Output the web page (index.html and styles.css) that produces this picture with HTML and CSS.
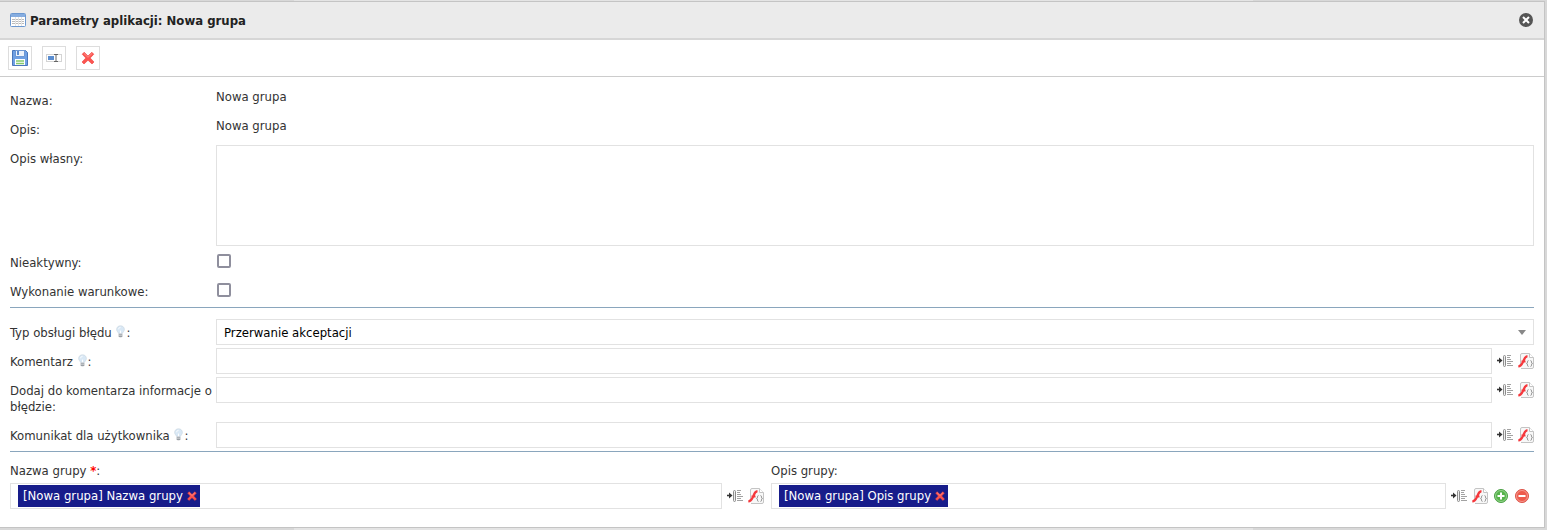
FILE: index.html
```html
<!DOCTYPE html>
<html lang="pl">
<head>
  <meta charset="UTF-8">
  <title>Parametry aplikacji</title>
  <link rel="stylesheet" href="styles.css">
</head>
<body>

  <!-- Shared icons -->
  <svg class="sprite" aria-hidden="true">
    <symbol id="i-cross" viewBox="0 0 16 16">
      <path d="M4.200 2.200 8 6l3.800-3.800 2 2L10.200 8l3.800 4-2 2L8 10.200 4 14l-2-2 3.800-4-3.600-3.800z" fill="#fb5550" stroke="#f0403c" stroke-width=".6" stroke-linejoin="round"/>
      <path d="M4 3.500 8 7.300l4-3.800" fill="none" stroke="#ff8f8a"/>
    </symbol>
    <symbol id="i-bulb" viewBox="0 0 12 14">
      <path d="M6 .8C3.400.8 1.800 2.500 1.800 4.700c0 1.900 1.400 2.700 2 4.300h4.400c.6-1.600 2-2.400 2-4.300C10.200 2.500 8.600.8 6 .8z" fill="#d9e8f5" stroke="#cdd8e2" stroke-width=".8"/>
      <path d="M4 4.500C4 3.200 5 2.500 6 2.500M6 9V6" fill="none" stroke="#fff"/>
      <path d="M4 9.500h4v2.700L7 13.400H5l-1-1.200z" fill="#9aa0a6"/>
      <path d="M4 11h4" stroke="#d8dadd"/>
    </symbol>
    <symbol id="i-insert" viewBox="0 0 16 16">
      <path d="M0 7.500h3" stroke="#333" stroke-width="1.600"/>
      <path d="M2 4.500 5.500 7.500 2 10.500z" fill="#333"/>
      <rect x="6.500" y="2.500" width="2" height="11" rx="1" fill="#eee" stroke="#8c8c8c"/>
      <path d="M10 2.500h4M10 4.500h3M10 6.500h4M10 8.500h6M10 10.500h4M10 12.500h6" stroke="#a2a2a2"/>
    </symbol>
    <symbol id="i-fx" viewBox="0 0 16 16">
      <path d="M2.500 13V2q0-1.500 1.500-1.500h7.500l4 4V14q0 1.500-1.500 1.500H3" fill="#f8f8f8" stroke="#c4c4c4"/>
      <path d="M11.500.5v4h4" fill="#fff" stroke="#c4c4c4"/>
      <path d="M9.500 3.200C6.500 3.500 6.200 6.500 5 9s-2.200 4.300-4.700 4.500M3.500 8.500h4" fill="none" stroke="#f5383c" stroke-width="2.200"/>
      <path d="M10.500 7.500q-1 0-1 1.500t-1 1.500q1 0 1 1.500t1 1.500M12.500 7.500q1 0 1 1.500t1 1.500q-1 0-1 1.500t-1 1.500" fill="none" stroke="#999"/>
    </symbol>
  </svg>

  <div class="dialog" role="dialog" aria-labelledby="dialogTitle">
    <div class="dialog-header">
      <svg class="icon" viewBox="0 0 16 16">
        <rect x=".5" y="1.500" width="15" height="13" rx="1" fill="#fff" stroke="#6c98d0"/>
        <path d="M1 2h14v3H1z" fill="#86ade0"/>
        <path d="M2 7.500h12M2 9.500h12M2 11.500h12" stroke="#bbb"/>
        <path d="M5.500 5v9M8.500 5v9M11.500 5v9" stroke="#e4e4e4"/>
      </svg>
      <h1 id="dialogTitle">Parametry aplikacji: Nowa grupa</h1>
      <button type="button" class="close" aria-label="Zamknij">
        <svg viewBox="0 0 14 14">
          <circle cx="7" cy="7" r="7" fill="#555"/>
          <path d="m4 4 6 6M10 4l-6 6" stroke="#fff" stroke-width="2"/>
        </svg>
      </button>
    </div>

    <div class="toolbar">
      <button type="button" aria-label="Zapisz">
        <svg class="icon" viewBox="0 0 16 16">
          <path d="M.5.5h13l2 2v13H.5z" fill="#6fa0e4" stroke="#4a76bb"/>
          <path d="M3.500.5h9v6h-9z" fill="#edf3fb" stroke="#6d97d4"/>
          <path d="M5 1h2v4H5z" fill="#5c8bd0"/>
          <path d="M3 9h10v6H3z" fill="#fff"/>
          <path d="M4 11h8M4 13.500h8" stroke="#85c96c" stroke-width="1.500"/>
        </svg>
      </button>
      <button type="button" aria-label="Pole">
        <svg class="icon" viewBox="0 0 16 16">
          <rect x=".5" y="4.500" width="15" height="7" fill="#fff" stroke="#d4d4d4"/>
          <path d="M2 6h6v4H2z" fill="#5a8dd0"/>
          <path d="M8 4.500h4M8 11.500h4M10 4.500v7" fill="none" stroke="#666"/>
        </svg>
      </button>
      <button type="button" aria-label="Usuń">
        <svg class="icon"><use href="#i-cross"/></svg>
      </button>
    </div>

    <form class="content">
      <div class="rows">
        <div class="row">
          <span class="label">Nazwa:</span>
          <span class="value">Nowa grupa</span>
        </div>
        <div class="row">
          <span class="label">Opis:</span>
          <span class="value">Nowa grupa</span>
        </div>
        <div class="row">
          <label class="label" for="ownDesc">Opis własny:</label>
          <textarea id="ownDesc"></textarea>
        </div>
        <div class="row">
          <label class="label" for="inactive">Nieaktywny:</label>
          <input type="checkbox" id="inactive">
        </div>
        <div class="row">
          <label class="label" for="conditional">Wykonanie warunkowe:</label>
          <input type="checkbox" id="conditional">
        </div>
      </div>

      <hr>

      <div class="rows">
        <div class="row">
          <label class="label" for="errorType">Typ obsługi błędu <svg class="bulb"><use href="#i-bulb"/></svg>:</label>
          <div class="select">
            <select id="errorType">
              <option>Przerwanie akceptacji</option>
            </select>
          </div>
        </div>
        <div class="row">
          <label class="label" for="comment">Komentarz <svg class="bulb"><use href="#i-bulb"/></svg>:</label>
          <div class="field">
            <input type="text" id="comment">
            <button type="button" aria-label="Wstaw"><svg class="icon"><use href="#i-insert"/></svg></button>
            <button type="button" aria-label="Funkcja"><svg class="icon"><use href="#i-fx"/></svg></button>
          </div>
        </div>
        <div class="row">
          <label class="label" for="errorInfo">Dodaj do komentarza informacje o błędzie:</label>
          <div class="field">
            <input type="text" id="errorInfo">
            <button type="button" aria-label="Wstaw"><svg class="icon"><use href="#i-insert"/></svg></button>
            <button type="button" aria-label="Funkcja"><svg class="icon"><use href="#i-fx"/></svg></button>
          </div>
        </div>
        <div class="row">
          <label class="label" for="message">Komunikat dla użytkownika <svg class="bulb"><use href="#i-bulb"/></svg>:</label>
          <div class="field">
            <input type="text" id="message">
            <button type="button" aria-label="Wstaw"><svg class="icon"><use href="#i-insert"/></svg></button>
            <button type="button" aria-label="Funkcja"><svg class="icon"><use href="#i-fx"/></svg></button>
          </div>
        </div>
      </div>

      <hr>

      <div class="columns">
        <div>
          <label for="groupName">Nazwa grupy <b class="required">*</b>:</label>
          <div class="field">
            <div class="tags">
              <span class="tag">[Nowa grupa] Nazwa grupy
                <button type="button" aria-label="Usuń"><svg><use href="#i-cross"/></svg></button>
              </span>
              <input type="text" id="groupName">
            </div>
            <button type="button" aria-label="Wstaw"><svg class="icon"><use href="#i-insert"/></svg></button>
            <button type="button" aria-label="Funkcja"><svg class="icon"><use href="#i-fx"/></svg></button>
          </div>
        </div>
        <div class="last">
          <label for="groupDesc">Opis grupy:</label>
          <div class="field">
            <div class="tags">
              <span class="tag">[Nowa grupa] Opis grupy
                <button type="button" aria-label="Usuń"><svg><use href="#i-cross"/></svg></button>
              </span>
              <input type="text" id="groupDesc">
            </div>
            <button type="button" aria-label="Wstaw"><svg class="icon"><use href="#i-insert"/></svg></button>
            <button type="button" aria-label="Funkcja"><svg class="icon"><use href="#i-fx"/></svg></button>
            <button type="button" aria-label="Dodaj">
              <svg class="icon" viewBox="0 0 16 16">
                <circle cx="8" cy="8" r="6.500" fill="#56b34b" stroke="#4ba145"/>
                <circle cx="8" cy="8" r="5.500" fill="none" stroke="#a6dc9e" stroke-width=".8"/>
                <path d="M8 4.500v7M4.500 8h7" stroke="#fff" stroke-width="2"/>
              </svg>
            </button>
            <button type="button" aria-label="Usuń wiersz">
              <svg class="icon" viewBox="0 0 16 16">
                <circle cx="8" cy="8" r="6.500" fill="#ee5a4c" stroke="#dc5449"/>
                <circle cx="8" cy="8" r="5.500" fill="none" stroke="#f8a69d" stroke-width=".8"/>
                <path d="M4.500 8h7" stroke="#fff" stroke-width="2"/>
              </svg>
            </button>
          </div>
        </div>
      </div>
    </form>
  </div>

</body>
</html>
```
FILE: styles.css
```css
* {
  box-sizing: border-box;
}

body {
  margin: 0;
  padding: 1px 2px 2px 0;
  background: linear-gradient(to right, #d8d8d8 19%, #e4e4e4 19% 81%, #d8d8d8 81%);
  color: #333;
  font-family: "DejaVu Sans Condensed", Tahoma, "Noto Sans", sans-serif;
  font-size: 13px;
  line-height: 16px;
}

button,
input,
select,
textarea {
  font: inherit;
  margin: 0;
}

button {
  display: flex;
  padding: 0;
  border: none;
  background: none;
  cursor: pointer;
}

.sprite {
  display: none;
}

.icon {
  display: block;
  width: 16px;
  height: 16px;
}

.dialog {
  background-color: #fff;
  border: 1px solid #c4c4c4;
  border-left: none;
}

.dialog-header {
  display: flex;
  align-items: center;
  gap: 4px;
  height: 38px;
  padding: 0 11px 0 10px;
  background-color: #ebebeb;
  border-bottom: 2px solid #d6d6d6;
}

h1 {
  flex: 1;
  margin: 0;
  padding-top: 2px;
  color: #222;
  font-size: 13px;
}

.close svg {
  width: 14px;
  height: 14px;
}

.toolbar {
  display: flex;
  gap: 10px;
  padding: 6px 8px;
  border-bottom: 1px solid #ccc;
}

.toolbar button {
  padding: 3px;
  border: 1px solid #ddd;
}

.content {
  padding: 10px 10px 18px;
}

.rows {
  display: flex;
  flex-direction: column;
  gap: 3px;
}

.row {
  display: grid;
  grid-template-columns: 206px 1fr;
  align-items: start;
  min-height: 26px;
}

.label {
  padding: 6px 0 4px;
}

.value {
  padding-top: 2px;
}

.bulb {
  width: 11px;
  height: 13px;
  vertical-align: -1px;
}

textarea {
  display: block;
  width: 100%;
  height: 101px;
  border: 1px solid #e2e2e2;
  resize: none;
}

input[type="checkbox"] {
  appearance: none;
  width: 14px;
  height: 14px;
  margin: 5px 0 0 1px;
  border: 2px solid #8f8f9d;
  border-radius: 2px;
  background-color: #fff;
}

hr {
  margin: 3px 0 11px;
  border: none;
  border-top: 1px solid #8aa6bd;
}

.select {
  display: grid;
  align-items: center;
}

.select select {
  grid-area: 1 / 1;
  width: 100%;
  height: 26px;
  padding: 2px 7px 0;
  appearance: none;
  background-color: #fff;
  border: 1px solid #e2e2e2;
  border-radius: 0;
  color: #000;
}

.select::after {
  content: "";
  grid-area: 1 / 1;
  justify-self: end;
  margin-right: 8px;
  border: 4px solid transparent;
  border-top: 5px solid #888;
  border-bottom: none;
  pointer-events: none;
}

.field {
  display: flex;
  align-items: center;
  gap: 5px;
}

.field > input,
.tags {
  flex: 1;
  min-width: 0;
  height: 26px;
  border: 1px solid #e2e2e2;
}

.tags {
  display: flex;
  padding: 1px 7px;
}

.tags input {
  flex: 1;
  min-width: 0;
  border: none;
}

.tag {
  display: flex;
  align-items: center;
  gap: 3px;
  padding: 0 2px 0 5px;
  background-color: #171c8a;
  color: #fff;
}

.tag svg {
  width: 12px;
  height: 12px;
}

.columns {
  display: grid;
  grid-template-columns: 754fr 763fr;
  column-gap: 7px;
}

.columns label {
  display: block;
  padding-bottom: 4px;
}

.last {
  padding-right: 4px;
}

.required {
  color: #f00;
}
```
